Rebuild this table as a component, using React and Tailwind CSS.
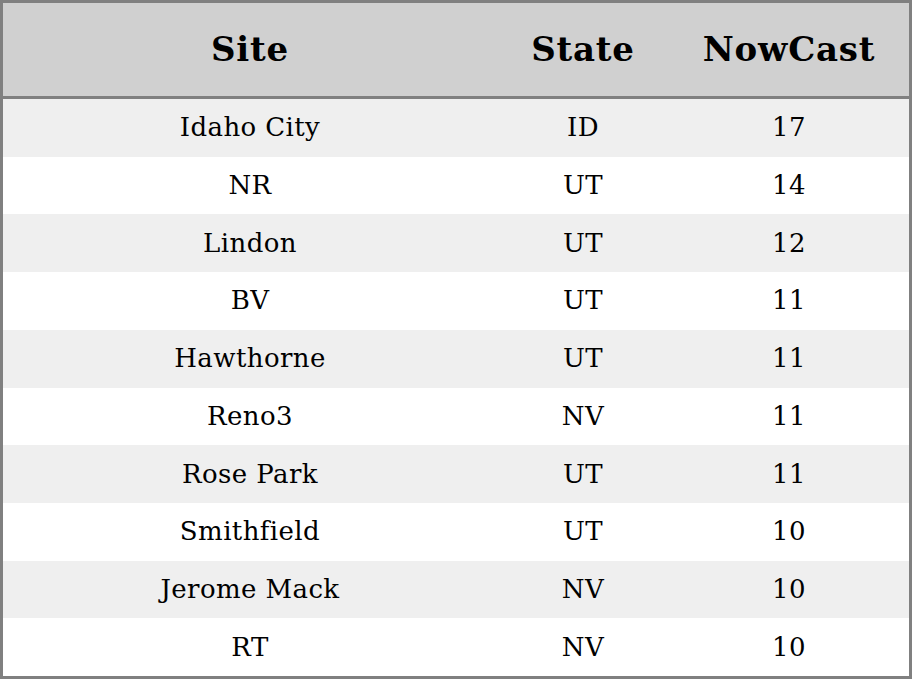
const rows = [
  { site: 'Idaho City', state: 'ID', nowcast: 17 },
  { site: 'NR', state: 'UT', nowcast: 14 },
  { site: 'Lindon', state: 'UT', nowcast: 12 },
  { site: 'BV', state: 'UT', nowcast: 11 },
  { site: 'Hawthorne', state: 'UT', nowcast: 11 },
  { site: 'Reno3', state: 'NV', nowcast: 11 },
  { site: 'Rose Park', state: 'UT', nowcast: 11 },
  { site: 'Smithfield', state: 'UT', nowcast: 10 },
  { site: 'Jerome Mack', state: 'NV', nowcast: 10 },
  { site: 'RT', state: 'NV', nowcast: 10 },
];

const App = () => {
  return (
    <div className="w-[912px] h-[679px] border-[3px] border-[#808080] flex flex-col font-['DejaVu_Serif',serif] text-black [font-variant-ligatures:none]">
      {/* Header */}
      <div className="h-[96px] shrink-0 grid grid-cols-[494px_172px_240px] items-center bg-[#d0d0d0] border-b-[3px] border-[#808080] text-[34px] tracking-[0.8px] font-bold text-center">
        <div>Site</div>
        <div>State</div>
        <div>NowCast</div>
      </div>

      {/* Rows */}
      <div className="flex-1 flex flex-col">
        {rows.map((row, i) => (
          <div
            key={row.site}
            className={`flex-1 grid grid-cols-[494px_172px_240px] items-center text-center text-[26px] tracking-[0.4px] ${
              i % 2 === 0 ? 'bg-[#efefef]' : 'bg-white'
            }`}
          >
            <div>{row.site}</div>
            <div>{row.state}</div>
            <div>{row.nowcast}</div>
          </div>
        ))}
      </div>
    </div>
  );
};

export default App;
